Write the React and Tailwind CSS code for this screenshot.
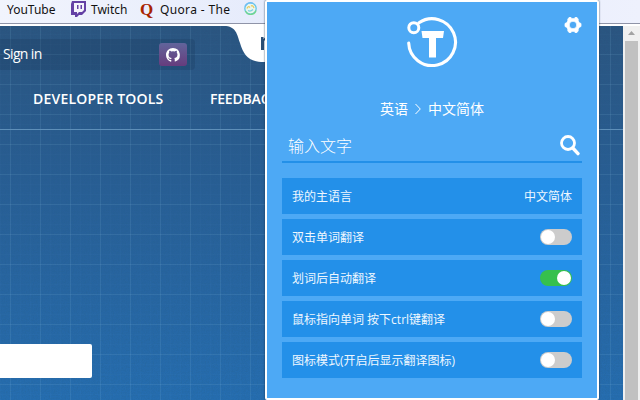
import React from 'react';

const settings = [
  { label: '我的主语言', value: '中文简体' },
  { label: '双击单词翻译', on: false },
  { label: '划词后自动翻译', on: true },
  { label: '鼠标指向单词 按下ctrl键翻译', on: false },
  { label: '图标模式(开启后显示翻译图标)', on: false },
];

function BookmarkBar() {
  return (
    <div className="flex h-[26px] w-full border-b-2 border-white bg-[#8f94a8] pb-px font-['Noto_Sans',sans-serif] text-[12px] leading-[19px] text-[#111]">
      <div className="flex h-[23px] w-full items-start whitespace-nowrap bg-linear-to-r from-[#f1f4fd] via-[#e4eafb] to-[#eef1fd] pl-[7px]">
        <span className="w-[51px] shrink-0">YouTube</span>
        <svg className="ml-[13px] mt-px shrink-0" width="15" height="16" viewBox="0 0 15 16">
          <path fill="#6441a5" d="M1 0H15V10L11 14H8L6 16H4V14H0V3Z" />
          <path fill="#f4f3fc" d="M3 2H13V9L11 11H8L6 13V11H3Z" />
          <path fill="#6441a5" d="M6 4H7.5V8H6ZM9.5 4H11V8H9.5Z" />
        </svg>
        <span className="ml-[5px] w-[35px] shrink-0">Twitch</span>
        <span className="ml-[14px] w-[13px] shrink-0 font-['Liberation_Serif',serif] text-[17px] font-bold text-[#a82400]">Q</span>
        <span className="ml-[7px] w-[70px] shrink-0 tracking-[0.35px]">Quora - The</span>
        <svg className="ml-[14px] mt-[2px] shrink-0" width="13" height="13" viewBox="0 0 13 13" fill="none">
          <circle cx="6.5" cy="6.5" r="5.7" fill="#e9f6ef" stroke="#66c4e8" strokeWidth="1.3" />
          <path d="M1 4.5A5.7 5.7 0 0 1 9 1.4" stroke="#6fbdf3" strokeWidth="1.4" />
          <path d="M1.4 9A5.7 5.7 0 0 0 12 8.5" stroke="#72d78b" strokeWidth="1.4" />
          <path d="M3 6.5Q4 3.5 6 5.5M7 4Q9 3 10 6" stroke="#e9c95c" strokeWidth="1.3" />
          <path d="M4 8.5Q6.5 10 9 7.5" stroke="#7fcfe0" strokeWidth="1.2" />
        </svg>
      </div>
    </div>
  );
}

function Texture() {
  return (
    <svg className="absolute inset-0" width="623" height="374">
      <defs>
        <filter id="grain" x="0" y="0" width="100%" height="100%">
          <feTurbulence type="fractalNoise" baseFrequency="0.75" numOctaves="2" seed="4" />
          <feColorMatrix values="0 0 0 0 0.02  0 0 0 0 0.12  0 0 0 0 0.25  0.9 0 0 0 -0.32" />
        </filter>
        <pattern id="grid" x="10" y="28" width="30" height="30" patternUnits="userSpaceOnUse">
          <path d="M10.5 0V30M20.5 0V30M0 10.5H30M0 20.5H30" stroke="#9fd0ee" strokeOpacity=".02" />
          <path d="M.5 0V30M0 .5H30" stroke="#9fd0ee" strokeOpacity=".11" />
        </pattern>
      </defs>
      <rect width="623" height="374" filter="url(#grain)" opacity=".6" />
      <rect width="623" height="374" fill="url(#grid)" />
      <path fill="#fff" d="M224 0C236 0 237 8 240 17C244 30 249 36 264 36H300V0Z" />
      <path fill="#2a4f75" d="M261 11H263.5V13L265 11.5V14L264 15V24H261Z" />
    </svg>
  );
}

function Page() {
  return (
    <div className="relative h-[374px] w-[623px] overflow-hidden bg-linear-to-b from-[#2b547f] via-[#285d93] via-40% to-[#256db0]">
      <Texture />
      <div className="relative flex h-full flex-col whitespace-nowrap font-['Open_Sans',sans-serif] text-[14px] leading-5 text-white">
        <div className="mt-[13px] flex h-[31px] w-[195px] items-center justify-between rounded-r bg-[#132b49]/20 pl-[3px] pr-2">
          <span className="-mt-px tracking-[-0.65px]">Sign in</span>
          <div className="flex h-[23px] w-7 items-center justify-center rounded-[3px] bg-linear-to-b from-[#61649b] to-[#663c7d]">
            <svg width="14" height="14" viewBox="0 0 16 16" fill="#fff">
              <path d="M8 0C3.58 0 0 3.58 0 8c0 3.54 2.29 6.53 5.47 7.59.4.07.55-.17.55-.38v-1.49C3.8 14.2 3.48 13.1 3.3 12.7c-.1-.23-.48-.94-.82-1.13-.28-.15-.68-.52-.01-.53.63-.01 1.08.58 1.23.82.72 1.21 1.87.87 2.33.66.07-.52.28-.87.51-1.07-1.78-.2-3.64-.89-3.64-3.95 0-.87.31-1.59.82-2.15-.08-.2-.36-1.02.08-2.12 0 0 .67-.21 2.2.82a7.7 7.7 0 0 1 4 0c1.53-1.04 2.2-.82 2.2-.82.44 1.1.16 1.92.08 2.12.51.56.82 1.27.82 2.15 0 3.07-1.87 3.75-3.65 3.95.29.25.54.73.54 1.48v2.2c0 .21.15.46.55.38A8 8 0 0 0 8 0Z" />
            </svg>
          </div>
        </div>
        <div className="flex h-[60px] border-b border-[#5e8fb9] pl-[33px] pt-[19px] font-semibold">
          <span className="w-[130px] shrink-0 tracking-[0.2px]">DEVELOPER TOOLS</span>
          <span className="ml-[47px] tracking-[-0.2px]">FEEDBACK</span>
        </div>
        <div className="mt-[214px] h-[34px] w-[92px] rounded-r-[2px] bg-white" />
      </div>
    </div>
  );
}

function Scrollbar() {
  return (
    <div className="flex h-[374px] w-[17px] flex-col bg-[#f0f0f0] px-[2px]">
      <svg className="h-[15px] w-[13px]" viewBox="0 0 13 15">
        <path fill="#a3a3a3" d="M3 9L6.5 5L10 9Z" />
      </svg>
      <div className="flex-1 bg-[#c1c1c1]" />
    </div>
  );
}

function Toggle({ on }) {
  return (
    <div className={on ? 'flex h-4 w-8 items-center justify-end rounded-full bg-[#36c04d] px-px' : 'flex h-4 w-8 items-center rounded-full bg-[#ccc] px-px'}>
      <div className="size-[14px] rounded-full bg-white" />
    </div>
  );
}

function Popup() {
  return (
    <div className="absolute left-[265px] top-0 flex h-[400px] w-[334px] flex-col whitespace-nowrap rounded-[2px] border-2 border-white bg-[#4da9f5] px-[15px] font-['Open_Sans','Noto_Sans_CJK_SC',sans-serif] text-white shadow-[0_0_2px_#18324e]">
      <div className="flex h-[96px] justify-between">
        <div className="w-[18px]" />
        <svg className="-ml-[3px] mt-[13px]" width="54" height="54" viewBox="0 0 54 54" fill="none" stroke="#fff">
          <path d="M15 7.7A23.4 23.4 0 1 1 4.7 28" strokeWidth="3.1" strokeLinecap="round" />
          <circle cx="9.8" cy="12.7" r="5" strokeWidth="3" />
          <path fill="#fff" stroke="none" d="M17.5 16H40L39 23H32V42.5H25V23H18.5Z" />
        </svg>
        <svg className="mt-[14px]" width="18" height="18" viewBox="0 0 18 18">
          <path fill="#fff" fillRule="evenodd" stroke="#fff" strokeWidth=".8" strokeLinejoin="round" d="M5 1.5H7L8 2.7H10L11 1.5H13L14.2 3.2L14.2 4.9L15.3 6.8L17 7.5V10.5L15.3 11.2L14.2 13.1L14.2 14.8L13 16.5H11L10 15.3H8L7 16.5H5L3.8 14.8L3.8 13.1L2.7 11.2L1 10.5V7.5L2.7 6.8L3.8 4.9L3.8 3.2ZM9 5.2A3.8 3.8 0 1 0 9 12.8A3.8 3.8 0 1 0 9 5.2Z" />
        </svg>
      </div>
      <div className="flex h-6 items-start pl-[98px] text-[14px] leading-[22px]">
        <span>英语</span>
        <svg className="ml-[7px] mt-[6px]" width="6" height="10" viewBox="0 0 6 10" fill="none" stroke="#fff">
          <path d="M.5 0L5.3 5L.5 10" />
        </svg>
        <span className="ml-[7px]">中文简体</span>
      </div>
      <div className="mt-[10px] flex h-[31px] items-start justify-between border-b-2 border-[#2390e8] pl-[6px] pr-[2px]">
        <span className="text-[16px] font-light leading-[28px]">输入文字</span>
        <svg className="mt-[3px]" width="20" height="21" viewBox="0 0 20 21" fill="none" stroke="#fff">
          <circle cx="8" cy="8" r="6.5" strokeWidth="2.8" />
          <path d="M12.8 13L18 18.6" strokeWidth="3.4" strokeLinecap="round" />
        </svg>
      </div>
      <div className="mt-[15px] flex flex-col gap-[5px] text-[12px] leading-5 text-[#eef7ff]">
        {settings.map((s) => (
          <div key={s.label} className="flex h-9 items-center justify-between bg-[#2390e9] px-[10px]">
            <span className="pt-[2px]">{s.label}</span>
            {s.value ? <span className="pt-[2px]">{s.value}</span> : <Toggle on={s.on} />}
          </div>
        ))}
      </div>
    </div>
  );
}

export default function App() {
  return (
    <div className="relative h-[400px] w-[640px] overflow-hidden bg-white">
      <BookmarkBar />
      <div className="flex">
        <Page />
        <Scrollbar />
      </div>
      <Popup />
    </div>
  );
}
